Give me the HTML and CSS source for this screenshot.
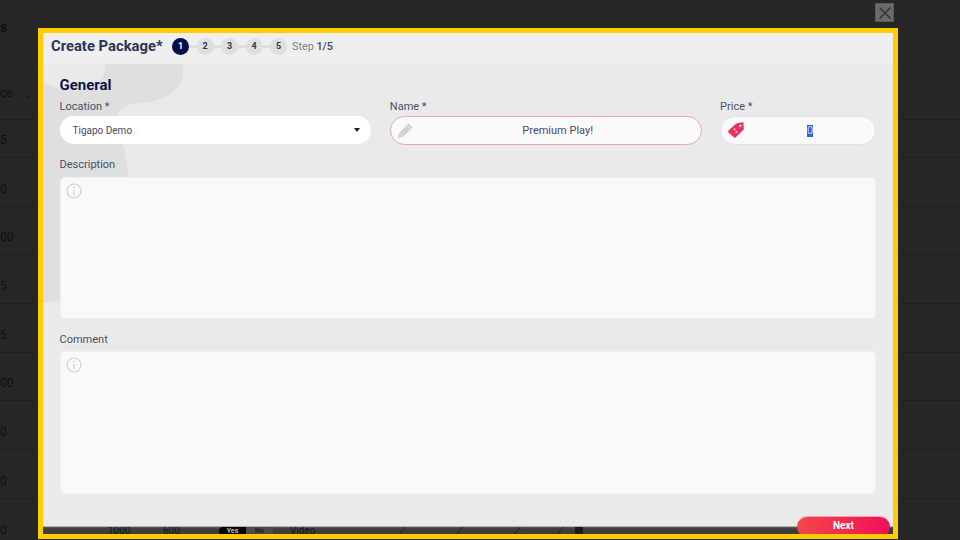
FILE: index.html
```html
<!DOCTYPE html>
<html lang="en">
<head>
<meta charset="utf-8">
<title>Create Package</title>
<link rel="stylesheet" href="styles.css">
</head>
<body>
<div class="backdrop">
  <div class="bg-title">s</div>
  <div class="bg-row bg-head"><span class="bg-cell">ce</span><span class="bg-caret">&#8964;</span></div>
  <div class="bg-row bg-first"><span class="bg-cell">5</span></div>
  <div class="bg-row"><span class="bg-cell">0</span></div>
  <div class="bg-row"><span class="bg-cell">00</span></div>
  <div class="bg-row"><span class="bg-cell">5</span></div>
  <div class="bg-row"><span class="bg-cell">5</span></div>
  <div class="bg-row"><span class="bg-cell">00</span></div>
  <div class="bg-row"><span class="bg-cell">0</span></div>
  <div class="bg-row"><span class="bg-cell">0</span></div>
  <div class="bg-row"><span class="bg-cell">0</span></div>
</div>

<button class="close" type="button" aria-label="Close">
  <svg width="14" height="14" viewBox="0 0 14 14"><path d="M1.5 1.5l11 11M12.5 1.5l-11 11" stroke="#353535" stroke-width="1.6" fill="none"/></svg>
</button>

<div class="frame">
  <section class="modal">
    <header class="modal-head">
      <h1 class="modal-title">Create Package*</h1>
      <ol class="steps">
        <li class="step step-on">1</li>
        <li class="step">2</li>
        <li class="step">3</li>
        <li class="step">4</li>
        <li class="step">5</li>
      </ol>
      <span class="step-count">Step <b>1/5</b></span>
    </header>
    <div class="modal-body">
      <svg class="blob" width="150" height="245" viewBox="0 0 150 245"><path d="M62 0H140C143 22 127 37 97 39C77 41 70 48 75 66C82 86 85 101 85 113V228L0 239V19C22 28 62 36 62 0Z" fill="#dfdfdf"/></svg>
      <h2 class="section">General</h2>
      <div class="row">
        <div class="field f-loc">
          <label class="label">Location *</label>
          <div class="pill pill-select"><span>Tigapo Demo</span><i class="caret"></i></div>
        </div>
        <div class="field f-name">
          <label class="label">Name *</label>
          <div class="pill pill-name">
            <svg class="pill-icon" width="17" height="17" viewBox="0 0 17 17"><path d="M.8 16.2l1.2-4.9L11.6 1.2l4.2 4-9.9 9.8z" fill="#d2d2d2"/><path d="M3.2 11.6l3.2 3.2" stroke="#f0f0f0" stroke-width=".8"/><path d="M10 3.5l3.5 3.5" stroke="#f0f0f0" stroke-width=".8"/></svg>
            <span class="pill-value">Premium Play!</span>
          </div>
        </div>
        <div class="field f-price">
          <label class="label">Price *</label>
          <div class="pill pill-price">
            <svg class="pill-icon" width="17" height="17" viewBox="0 0 17 17"><path d="M9.5 2.5L15.5 1.2 15.8 7 7.8 14.8 2 9.6z" fill="#e8345f" stroke="#e8345f" stroke-width="2" stroke-linejoin="round"/><circle cx="13.3" cy="3.8" r="1.1" fill="#fafafa"/><path d="M8.2 6.6l-1.2 1.4M10 9.4l-1.2 1.4" stroke="#fafafa" stroke-width="1.3"/></svg>
            <span class="pill-value"><span class="selected">0</span></span>
          </div>
        </div>
      </div>
      <div class="field f-desc">
        <label class="label">Description</label>
        <div class="area area-desc">
          <svg width="16" height="16" viewBox="0 0 16 16"><circle cx="8" cy="8" r="7" fill="none" stroke="#cfcfcf" stroke-width="1.2"/><path d="M8 7v5" stroke="#cfcfcf" stroke-width="1.3"/><circle cx="8" cy="4.6" r=".9" fill="#cfcfcf"/></svg>
        </div>
      </div>
      <div class="field f-comment">
        <label class="label">Comment</label>
        <div class="area area-comment">
          <svg width="16" height="16" viewBox="0 0 16 16"><circle cx="8" cy="8" r="7" fill="none" stroke="#cfcfcf" stroke-width="1.2"/><path d="M8 7v5" stroke="#cfcfcf" stroke-width="1.3"/><circle cx="8" cy="4.6" r=".9" fill="#cfcfcf"/></svg>
        </div>
      </div>
    </div>
  </section>
  <div class="strip">
    <span class="s-1000">1000</span>
    <span class="s-600">600</span>
    <span class="s-toggle"><span class="s-yes">Yes</span><span class="s-no">No</span></span>
    <span class="s-video">Video</span>
    <i class="s-slash s-a"></i>
    <i class="s-slash s-b"></i>
    <i class="s-slash s-c"></i>
    <i class="s-slash s-d"></i>
    <i class="s-square"></i>
  </div>
  <button class="next" type="button">Next</button>
</div>
</body>
</html>
```
FILE: styles.css
```css
* { box-sizing: border-box; }
html, body { margin: 0; height: 100%; }
body {
  width: 960px;
  height: 540px;
  overflow: hidden;
  position: relative;
  background: #262626;
  font-family: Roboto, "Liberation Sans", sans-serif;
}

.backdrop { color: #101010; font-size: 12px; }
.bg-title { height: 69px; padding-top: 19px; font-size: 14px; font-weight: 700; border-bottom: 1px solid #2b2b2b; }
.bg-row {
  display: flex;
  align-items: flex-end;
  height: 48.7px;
  padding-bottom: 10px;
  border-bottom: 1px solid #1f1f1f;
}
.bg-head { height: 51px; padding-bottom: 19px; }
.bg-first { height: 38px; }
.bg-caret { margin-left: 11px; font-size: 9px; color: #151515; }

.close {
  position: absolute;
  left: 875px;
  top: 3px;
  width: 19px;
  height: 19px;
  padding: 0;
  display: flex;
  align-items: center;
  justify-content: center;
  background: #6a6a6a;
  border: 1px solid #5a5a5a;
}

.frame {
  position: absolute;
  left: 38px;
  top: 28px;
  width: 860px;
  height: 511px;
  border: 5px solid #ffcc00;
  display: flex;
  flex-direction: column;
  overflow: hidden;
}

.modal { height: 493px; flex: none; display: flex; flex-direction: column; background: #eaeaea; }
.modal-head {
  height: 31px;
  flex: none;
  display: flex;
  align-items: center;
  padding: 0 0 5px 8px;
  background: #efefef;
}
.modal-title { margin: 0 7px 0 0; width: 114px; font-size: 14.8px; font-weight: 700; color: #2c3554; white-space: nowrap; }
.steps {
  list-style: none;
  margin: 0 5px 0 0;
  padding: 0;
  display: flex;
  gap: 7.5px;
  background: linear-gradient(#dfdfdf, #dfdfdf) center / 100% 3px no-repeat;
}
.step {
  width: 17px;
  height: 17px;
  border-radius: 50%;
  display: flex;
  align-items: center;
  justify-content: center;
  font-size: 9px;
  font-weight: 700;
  background: #dfdfdf;
  color: #2c3554;
}
.step-on { background: #060f45; color: #fff; }
.step-count { font-size: 10.8px; color: #7b8092; white-space: nowrap; }
.step-count b { font-weight: 500; color: #3b4260; }

.modal-body {
  flex: 1;
  position: relative;
  padding: 12px 17px 0 16.5px;
  display: flex;
  flex-direction: column;
  overflow: hidden;
}
.blob { position: absolute; left: 0; top: 0; }
.section { position: relative; margin: 0; height: 18px; font-size: 15px; line-height: 18px; font-weight: 700; color: #0d1647; }

.row { position: relative; display: flex; gap: 19px; margin-top: 2px; }
.field { position: relative; display: flex; flex-direction: column; }
.f-loc { width: 311.5px; }
.f-name { width: 312px; }
.f-price { width: 156px; margin-left: -0.5px; }
.label { height: 20px; padding-top: 4px; font-size: 11px; line-height: 14px; color: #4a5068; white-space: nowrap; }

.pill {
  height: 29px;
  border-radius: 15px;
  display: flex;
  align-items: center;
  font-size: 11px;
  color: #454b66;
}
.pill-select { height: 28px; background: #fff; justify-content: space-between; padding: 0 11px 0 13px; font-size: 10px; }
.caret { width: 0; height: 0; border: 3.5px solid transparent; border-top: 4px solid #222; border-bottom: 0; }
.pill-name { background: #fafafa; border: 1px solid #eca5b4; padding-left: 6px; }
.pill-price { background: #fafafa; border: 1px solid #eadfe2; padding-left: 6px; }
.pill-icon { flex: none; }
.pill-value { flex: 1; text-align: center; padding-left: 1px; }
.selected { display: inline-block; width: 6px; height: 12px; line-height: 12px; background: #2e63d4; color: #c8d6f5; font-size: 11px; }

.f-desc { margin-top: 9px; }
.f-desc .label { height: 23px; }
.f-comment { margin-top: 10px; }
.f-comment .label { height: 22px; }
.area {
  width: 816px;
  background: #f9f9f9;
  border: 1px solid #f0f0f0;
  border-radius: 5px;
  padding: 5px;
}
.area svg { display: block; }
.area-desc { height: 142px; }
.area-comment { height: 143px; padding-top: 5px; }

.strip {
  flex: 1;
  position: relative;
  display: flex;
  align-items: center;
  overflow: hidden;
  background: linear-gradient(#5a5a5a, #3c3c3c 30%, #3c3c3c);
  border-top: 1px solid #b0b0b0;
  font-size: 10px;
  line-height: 8px;
  color: #161616;
}
.s-1000 { margin-left: 65px; width: 55px; }
.s-600 { width: 56px; }
.s-toggle { display: flex; width: 54px; font-size: 7px; font-weight: 700; }
.s-yes { flex: 1; background: #050505; color: #bbb; text-align: center; border-radius: 5px 0 0 5px; }
.s-no { flex: 1; background: #4c4c4c; color: #222; text-align: center; }
.s-video { margin-left: 17px; }
.s-slash { width: 1px; height: 9px; background: #222; transform: rotate(40deg); margin-left: 87px; }
.s-b { margin-left: 56px; }
.s-c { margin-left: 57px; }
.s-d { margin-left: 42px; }
.s-square { width: 8px; height: 8px; background: #1c1c1c; margin-left: 14px; }

.next {
  position: absolute;
  left: 754px;
  top: 483px;
  width: 93px;
  height: 21px;
  padding: 0 0 3px;
  border: 0;
  border-top: 1px solid #f8a0a8;
  border-radius: 10.5px;
  background: linear-gradient(90deg, #f4474a, #ee1058);
  color: #fff;
  font: 700 10px Roboto, "Liberation Sans", sans-serif;
}
```
